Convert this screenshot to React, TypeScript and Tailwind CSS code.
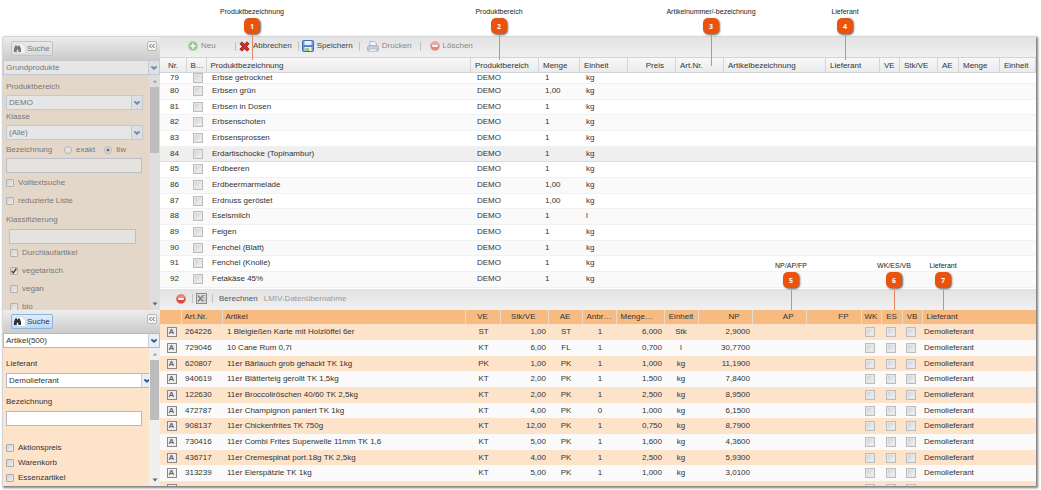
import type { ReactNode } from "react";
import { clsx } from "clsx";

type Product = { nr: number; name: string; menge: string; einheit: string };

const PRODUCTS: Product[] = [
  { nr: 79, name: "Erbse getrocknet", menge: "1", einheit: "kg" },
  { nr: 80, name: "Erbsen grün", menge: "1,00", einheit: "kg" },
  { nr: 81, name: "Erbsen in Dosen", menge: "1", einheit: "kg" },
  { nr: 82, name: "Erbsenschoten", menge: "1", einheit: "kg" },
  { nr: 83, name: "Erbsensprossen", menge: "1", einheit: "kg" },
  { nr: 84, name: "Erdartischocke (Topinambur)", menge: "1", einheit: "kg" },
  { nr: 85, name: "Erdbeeren", menge: "1", einheit: "kg" },
  { nr: 86, name: "Erdbeermarmelade", menge: "1,00", einheit: "kg" },
  { nr: 87, name: "Erdnuss geröstet", menge: "1,00", einheit: "kg" },
  { nr: 88, name: "Eselsmilch", menge: "1", einheit: "l" },
  { nr: 89, name: "Feigen", menge: "1", einheit: "kg" },
  { nr: 90, name: "Fenchel (Blatt)", menge: "1", einheit: "kg" },
  { nr: 91, name: "Fenchel (Knolle)", menge: "1", einheit: "kg" },
  { nr: 92, name: "Fetakäse 45%", menge: "1", einheit: "kg" },
];

const SELECTED_NR = 84;

const PRODUCT_COLUMNS = [
  { label: "Nr.", col: "w-[26px]", head: "pl-2" },
  { label: "B…", col: "w-5", head: "pl-1" },
  { label: "Produktbezeichnung", col: "", head: "pl-1" },
  { label: "Produktbereich", col: "w-[68px]", head: "pl-1" },
  { label: "Menge", col: "w-[41px]", head: "pl-1" },
  { label: "Einheit", col: "w-12", head: "pl-1" },
  { label: "Preis", col: "w-12", head: "pr-[11px] text-right" },
  { label: "Art.Nr.", col: "w-12", head: "pl-1" },
  { label: "Artikelbezeichnung", col: "w-[102px]", head: "pl-1" },
  { label: "Lieferant", col: "w-[54px]", head: "pl-1" },
  { label: "VE", col: "w-5", head: "pl-1" },
  { label: "Stk/VE", col: "w-[38px]", head: "pl-1" },
  { label: "AE", col: "w-[21px]", head: "pl-1" },
  { label: "Menge", col: "w-[41px]", head: "pl-1" },
  { label: "Einheit", col: "w-9", head: "pl-1" },
];

type Article = {
  nr: string;
  name: string;
  ve: string;
  stk: string;
  ae: string;
  anbruch: string;
  menge: string;
  einheit: string;
  np: string;
};

const ARTICLES: Article[] = [
  { nr: "264226", name: "1 Bleigießen Karte mit Holzlöffel 6er", ve: "ST", stk: "1,00", ae: "ST", anbruch: "1", menge: "6,000", einheit: "Stk", np: "2,9000" },
  { nr: "729046", name: "10 Cane Rum 0,7l", ve: "KT", stk: "6,00", ae: "FL", anbruch: "1", menge: "0,700", einheit: "l", np: "30,7700" },
  { nr: "620807", name: "11er Bärlauch grob gehackt TK 1kg", ve: "PK", stk: "1,00", ae: "PK", anbruch: "1", menge: "1,000", einheit: "kg", np: "11,1900" },
  { nr: "940619", name: "11er Blätterteig gerollt TK 1,5kg", ve: "KT", stk: "2,00", ae: "PK", anbruch: "1", menge: "1,500", einheit: "kg", np: "7,8400" },
  { nr: "122630", name: "11er Broccoliröschen 40/60 TK 2,5kg", ve: "KT", stk: "2,00", ae: "PK", anbruch: "1", menge: "2,500", einheit: "kg", np: "8,9500" },
  { nr: "472787", name: "11er Champignon paniert TK 1kg", ve: "KT", stk: "4,00", ae: "PK", anbruch: "0", menge: "1,000", einheit: "kg", np: "6,1500" },
  { nr: "908137", name: "11er Chickenfrites TK 750g", ve: "KT", stk: "12,00", ae: "PK", anbruch: "1", menge: "0,750", einheit: "kg", np: "8,7900" },
  { nr: "730416", name: "11er Combi Frites Superwelle 11mm TK 1,6", ve: "KT", stk: "5,00", ae: "PK", anbruch: "1", menge: "1,600", einheit: "kg", np: "4,3600" },
  { nr: "436717", name: "11er Cremespinat port.18g TK 2,5kg", ve: "KT", stk: "4,00", ae: "PK", anbruch: "1", menge: "2,500", einheit: "kg", np: "5,9300" },
  { nr: "313239", name: "11er Eierspätzle TK 1kg", ve: "KT", stk: "5,00", ae: "PK", anbruch: "1", menge: "1,000", einheit: "kg", np: "3,0100" },
];

const ARTICLE_COLUMNS = [
  { label: "", col: "w-[21px]", head: "" },
  { label: "Art.Nr.", col: "w-[41px]", head: "pl-[3px] text-left" },
  { label: "Artikel", col: "", head: "pl-[3px] text-left" },
  { label: "VE", col: "w-[35px]", head: "text-center" },
  { label: "Stk/VE", col: "w-12", head: "pr-3 text-right" },
  { label: "AE", col: "w-[34px]", head: "text-center" },
  { label: "Anbr…", col: "w-[34px]", head: "pl-1 text-left" },
  { label: "Menge…", col: "w-12", head: "pl-1 text-left" },
  { label: "Einheit", col: "w-[34px]", head: "text-center" },
  { label: "NP", col: "w-[54px]", head: "pr-3 text-right" },
  { label: "AP", col: "w-[54px]", head: "pr-3 text-right" },
  { label: "FP", col: "w-[55px]", head: "pr-3 text-right" },
  { label: "WK", col: "w-5", head: "text-center" },
  { label: "ES", col: "w-[21px]", head: "text-center" },
  { label: "VB", col: "w-5", head: "text-center" },
  { label: "Lieferant", col: "w-[114px]", head: "pl-1 text-left" },
];

const CALLOUTS = [
  { nr: 1, label: "Produktbezeichnung", pos: "left-[252px] top-2", line: "h-[26px]" },
  { nr: 2, label: "Produktbereich", pos: "right-[542px] top-2", line: "h-[26px]" },
  { nr: 3, label: "Artikelnummer/-bezeichnung", pos: "right-[330px] top-2", line: "h-8" },
  { nr: 4, label: "Lieferant", pos: "right-[196px] top-2", line: "h-[26px]" },
  { nr: 5, label: "NP/AP/FP", pos: "right-[250px] bottom-[180px]", line: "h-[22px]" },
  { nr: 6, label: "WK/ES/VB", pos: "right-[147px] bottom-[180px]", line: "h-[22px]" },
  { nr: 7, label: "Lieferant", pos: "right-[98px] bottom-[180px]", line: "h-[22px]" },
];

function Callout({ nr, label, pos, line }: (typeof CALLOUTS)[number]) {
  return (
    <div className={clsx("pointer-events-none absolute z-20 flex w-0 flex-col items-center", pos)}>
      <span className="text-[7px] leading-[7px] whitespace-nowrap text-[#222]">{label}</span>
      <span className="mt-[3px] flex size-4 shrink-0 items-center justify-center rounded-[5px] bg-[#e9530e] font-['Open_Sans',sans-serif] text-[7px] leading-none font-bold text-white shadow-[1px_1px_2px_rgba(0,0,0,0.6)]">
        {nr}
      </span>
      <span className={clsx("w-px shrink-0 bg-[#e98560]", line)} />
    </div>
  );
}

function Tick({ label }: { label: string }) {
  return (
    <input
      type="checkbox"
      aria-label={label}
      className="mx-auto block size-[10px] appearance-none border border-[#bdbdbd] bg-linear-to-br from-[#c9ced4] to-[#f8f8f8] shadow-[inset_0_0_0_1px_#e6e6e6] checked:bg-[#999] checked:bg-none"
    />
  );
}

function CheckField({ label, checked = false, className }: { label: string; checked?: boolean; className?: string }) {
  return (
    <label className={clsx("flex items-center gap-1", className)}>
      <span className="relative flex size-2">
        <input
          type="checkbox"
          defaultChecked={checked}
          className="peer size-2 appearance-none rounded-[1px] border border-[#a9aaac] bg-linear-to-br from-[#cfd2d4] to-[#f0f0f0]"
        />
        <svg aria-hidden viewBox="0 0 8 8" fill="none" stroke="#444" strokeWidth="1.4" className="pointer-events-none absolute inset-0 hidden size-2 peer-checked:block">
          <path d="M1.6 4 3.3 5.9 6.4 1.5" />
        </svg>
      </span>
      {label}
    </label>
  );
}

function RadioField({ label, checked = false }: { label: string; checked?: boolean }) {
  return (
    <label className="flex items-center gap-1">
      <input
        type="radio"
        name="suchart"
        defaultChecked={checked}
        className="size-2 appearance-none rounded-full border border-[#a9aaac] checked:bg-[radial-gradient(circle,#555_0_1px,#e6e6e6_2px)]"
      />
      {label}
    </label>
  );
}

function Combo({ label, value, muted, className }: { label: string; value: string; muted?: boolean; className?: string }) {
  return (
    <span className={clsx("relative flex h-[15px] border bg-white", muted ? "border-[#c6c8d0]" : "border-[#b5b8c8]", className)}>
      <select aria-label={label} className="min-w-0 flex-1 appearance-none pr-3 pl-[2px] leading-[13px] outline-none">
        <option>{value}</option>
      </select>
      <span
        className={clsx(
          "pointer-events-none absolute inset-y-0 right-0 flex w-[11px] items-center justify-center border-l",
          muted ? "border-[#c6c8d0] bg-[#dcdfe4]" : "border-[#c5cde0] bg-[#e9eff8]",
        )}
      >
        <svg aria-hidden viewBox="0 0 6 4" className="h-1 w-[6px]" fill={muted ? "#7085ad" : "#35558f"}>
          <path d="M0 .3h1.8L3 1.5 4.2.3H6v.9L3 3.9 0 1.2z" />
        </svg>
      </span>
    </span>
  );
}

function TextField({ label, className }: { label: string; className?: string }) {
  return (
    <input
      type="text"
      aria-label={label}
      className={clsx("block h-[15px] border border-[#b5b8c8] bg-white px-1 outline-none", className)}
    />
  );
}

function SidePanel({
  combo,
  comboLabel,
  active,
  className,
  thumb,
  children,
}: {
  combo: string;
  comboLabel: string;
  active?: boolean;
  className?: string;
  thumb: string;
  children: ReactNode;
}) {
  return (
    <section className={clsx("flex min-h-0 flex-col", className)}>
      <header className="flex h-[23px] shrink-0 items-start justify-between bg-linear-to-b from-[#ededed] to-[#cbcbcb] pt-1 pr-[3px] pl-2">
        <button
          type="button"
          className={clsx(
            "flex h-[15px] items-center gap-px rounded-[2px] border pr-[2px] pl-[2px]",
            active
              ? "border-[#8fb5dc] bg-linear-to-b from-[#e2effc] to-[#b9d8f8] text-[#333]"
              : "border-[#c3c3c3] bg-linear-to-b from-[#e9e9e9] to-[#dcdcdc] text-[#777]",
          )}
        >
          <svg aria-hidden viewBox="0 0 12 11" className={clsx("h-[11px] w-3", !active && "opacity-60")}>
            <path d="M3 .5h6l2.500 2.500v7.500H3z" fill="#fff" stroke="#c5ccd4" strokeWidth=".6" />
            <path d="M9 .5V3h2.500" fill="none" stroke="#c5ccd4" strokeWidth=".6" />
            <path d="M1.200 2.500h1.800v1h1v-1h1.800L7 6v3H4.300V6.800h-1.600V9H0V6z" fill="#2f3237" />
          </svg>
          Suche
        </button>
        <button
          type="button"
          aria-label="Einklappen"
          className="flex size-[10px] items-center justify-center rounded-[2px] border border-[#b9b9b9] bg-[#f3f3f3]"
        >
          <svg aria-hidden viewBox="0 0 8 6" fill="none" stroke="#666" strokeWidth="1" className="h-[6px] w-2 shrink-0">
            <path d="M3.500 1 1.500 3l2 2M6.500 1l-2 2 2 2" />
          </svg>
        </button>
      </header>
      <Combo label={comboLabel} value={combo} muted={!active} />
      <div className="flex min-h-0 flex-1">
        <div className="min-w-0 flex-1 overflow-hidden pl-[3px]">{children}</div>
        <div className={clsx("flex w-[11px] shrink-0 flex-col items-center pt-1 pb-1", active ? "bg-[#efefef]" : "bg-[#dedede]")}>
          <svg aria-hidden viewBox="0 0 6 4" className="h-1 w-[6px] shrink-0" fill="#9a9a9a">
            <path d="M1 3.500 3 1l2 2.500z" />
          </svg>
          <span className={clsx("mt-1 w-[9px] shrink-0 bg-[#bdbdbd]", thumb)} />
          <svg aria-hidden viewBox="0 0 6 4" className="mt-auto h-1 w-[6px] shrink-0" fill="#666">
            <path d="M.5.5 3 3.500 5.500.5z" />
          </svg>
        </div>
      </div>
    </section>
  );
}

function ToolButton({ icon, label, muted, className }: { icon: ReactNode; label: string; muted?: boolean; className?: string }) {
  return (
    <button type="button" className={clsx("flex items-center gap-[3px]", muted ? "text-[#888]" : "text-[#444]", className)}>
      {icon}
      {label}
    </button>
  );
}

function Separator() {
  return <span className="h-[9px] w-px bg-[#c3c3bb]" />;
}

function MinusIcon({ muted }: { muted?: boolean }) {
  return (
    <svg aria-hidden viewBox="0 0 10 10" className={clsx("size-[10px]", muted && "opacity-60")}>
      <circle cx="5" cy="5" r="4.600" fill="#e5443c" stroke="#d98780" strokeWidth=".6" />
      <path d="M1.200 4a3.900 3.900 0 0 1 7.600 0z" fill="#f08a80" />
      <rect x="2.200" y="4" width="5.600" height="2" rx=".3" fill="#fff" />
    </svg>
  );
}

function PlusIcon() {
  return (
    <svg aria-hidden viewBox="0 0 10 10" className="size-[10px] opacity-60">
      <circle cx="5" cy="5" r="4.600" fill="#63b34e" stroke="#8fc482" strokeWidth=".6" />
      <path d="M4.200 2.300h1.600v1.900h1.900v1.600H5.800v1.900H4.200V5.800H2.300V4.200h1.900z" fill="#fff" />
    </svg>
  );
}

function CancelIcon() {
  return (
    <svg aria-hidden viewBox="0 0 11 11" className="size-[11px]">
      <path
        d="M1 2.800 2.800.9 5.500 3.200 8.200.9 10 2.800 7.600 5.500l2.500 2.700-1.900 1.900-2.700-2.300-2.700 2.300L.9 8.200l2.500-2.700z"
        fill="#dc2a22"
        stroke="#7d1512"
        strokeWidth=".8"
      />
    </svg>
  );
}

function SaveIcon() {
  return (
    <svg aria-hidden viewBox="0 0 12 12" className="size-3">
      <rect x=".5" y=".5" width="11" height="11" rx="1" fill="#6d9be0" stroke="#3f6cb8" />
      <rect x="2.500" y="1" width="7" height="4" fill="#e9f1fb" />
      <rect x="1.500" y="5.600" width="9" height="1" fill="#3f6cb8" />
      <rect x="2.500" y="7" width="7" height="4" fill="#eef5e8" />
      <rect x="3.300" y="8.200" width="4" height="2.800" fill="#9cc276" />
    </svg>
  );
}

function PrintIcon() {
  return (
    <svg aria-hidden viewBox="0 0 12 11" className="h-[11px] w-3 opacity-70">
      <path d="M3 .6h4.800L9.300 2v3.500H3z" fill="#fff" stroke="#6f97cf" strokeWidth=".8" />
      <path d="M1.800 4.600h8.400l1.300 1.600v3H.5v-3z" fill="#b9c3d2" stroke="#7f8da3" strokeWidth=".8" />
      <path d="M2.500 7.800h7l.8 2.600H1.700z" fill="#eef2f8" stroke="#7f8da3" strokeWidth=".6" />
    </svg>
  );
}

function ExcelIcon() {
  return (
    <svg aria-hidden viewBox="0 0 11 11" className="size-[11px]">
      <rect x=".5" y=".5" width="10" height="10" fill="#dcdcdc" stroke="#8c8c8c" />
      <path d="M6.500 2.500h3M6.500 5h3M6.500 7.500h3" stroke="#9a9a9a" strokeWidth=".8" />
      <path d="m2 2.500 5 6M7 2.500l-5 6" stroke="#808080" strokeWidth="1.500" />
    </svg>
  );
}

function ProductGrid() {
  const cols = (
    <colgroup>
      {PRODUCT_COLUMNS.map((c, i) => (
        <col key={i} className={c.col} />
      ))}
    </colgroup>
  );

  return (
    <>
      <table className="w-full table-fixed border-collapse">
        {cols}
        <thead>
          <tr className="h-[15px] bg-linear-to-b from-[#f8f8f8] to-[#e8eaed]">
            {PRODUCT_COLUMNS.map((c, i) => (
              <th
                key={i}
                scope="col"
                className={clsx(
                  "overflow-hidden border-y border-r border-[#d4d4d4] py-0 text-left leading-[13px] font-normal whitespace-nowrap",
                  c.head,
                )}
              >
                {c.label}
              </th>
            ))}
          </tr>
        </thead>
      </table>
      {/* list is scrolled a few pixels into its first row */}
      <div className="min-h-0 flex-1 overflow-hidden bg-white">
        <table className="-mt-[6px] w-full table-fixed border-collapse" aria-label="Produkte">
          {cols}
          <tbody>
            {PRODUCTS.map((p) => (
              <tr
                key={p.nr}
                className={clsx(
                  "h-4 border-b first:align-bottom nth-[3n]:h-[15px]",
                  p.nr === SELECTED_NR ? "border-[#dcdcdc] bg-[#efefef]" : "border-[#f1f1f1] even:bg-[#fafafa]",
                )}
              >
                <td className="p-0 pl-[10px]">{p.nr}</td>
                <td className="p-0 pl-1">
                  <Tick label={`${p.name} auswählen`} />
                </td>
                <td className="p-0 pl-[6px]">{p.name}</td>
                <td className="p-0 pl-[6px]">DEMO</td>
                <td className="p-0 pl-[6px]">{p.menge}</td>
                <td className="p-0 pl-[6px]">{p.einheit}</td>
                <td colSpan={9} className="p-0" />
              </tr>
            ))}
          </tbody>
        </table>
      </div>
    </>
  );
}

function ArticleGrid() {
  return (
    <table className="w-full table-fixed border-collapse" aria-label="Artikel">
      <colgroup>
        {ARTICLE_COLUMNS.map((c, i) => (
          <col key={i} className={c.col} />
        ))}
      </colgroup>
      <thead>
        <tr className="h-[14px] bg-[#f7bb82]">
          {ARTICLE_COLUMNS.map((c, i) => (
            <th
              key={i}
              scope="col"
              className={clsx(
                "overflow-hidden border-r border-[#e9dccf] py-0 font-normal whitespace-nowrap last:border-r-0",
                c.head,
              )}
            >
              {c.label}
            </th>
          ))}
        </tr>
      </thead>
      <tbody>
        {[...ARTICLES, null].map((a, i) => (
          <tr key={i} className="h-4 odd:bg-[#fde3ca] even:bg-[#fafafa] nth-[3n]:h-[15px]">
            <td className="p-0 pl-[2px]">
              <span className="mx-auto flex size-[10px] items-center justify-center border border-[#888] bg-[#eee] text-[8px] leading-none font-bold text-[#666]">
                A
              </span>
            </td>
            <td className="p-0 pl-1">{a?.nr}</td>
            <td className="truncate p-0 pl-[5px]">{a?.name}</td>
            <td className="p-0 pl-[2px] text-center">{a?.ve}</td>
            <td className="p-0 pr-[2px] text-right">{a?.stk}</td>
            <td className="p-0 pl-[2px] text-center">{a?.ae}</td>
            <td className="p-0 pl-[2px] text-center">{a?.anbruch}</td>
            <td className="p-0 pr-[2px] text-right">{a?.menge}</td>
            <td className="p-0 text-center">{a?.einheit}</td>
            <td className="p-0 pr-[2px] text-right">{a?.np}</td>
            <td className="p-0" />
            <td className="p-0" />
            {["WK", "ES", "VB"].map((flag) => (
              <td key={flag} className="p-0 pr-[2px]">
                <Tick label={flag} />
              </td>
            ))}
            <td className="p-0 pl-[2px]">{a && "Demolieferant"}</td>
          </tr>
        ))}
      </tbody>
    </table>
  );
}

export default function App() {
  return (
    <div className="relative flex h-screen flex-col overflow-hidden bg-white pt-[37px] pr-[5px] pb-1 pl-[3px] font-['Liberation_Sans',Arial,sans-serif] text-[8px] leading-[10px] text-[#333]">
      <div className="flex min-h-0 flex-1 shadow-[1px_1px_2px_1px_rgba(0,0,0,0.5)]">
        <aside className="flex w-[157px] shrink-0 flex-col">
          <SidePanel
            combo="Grundprodukte"
            comboLabel="Suchbereich Produkte"
            className="flex-1 bg-[#e3d7c9] text-[#777] [&_input]:bg-[#e6e6e6] [&_input]:opacity-80 [&_select]:bg-[#e6e6e6]"
            thumb="h-[66px]"
          >
            <p className="mt-[7px]">Produktbereich</p>
            <Combo label="Produktbereich" value="DEMO" muted className="mt-[3px] mr-[6px]" />
            <p className="mt-[2px]">Klasse</p>
            <Combo label="Klasse" value="(Alle)" muted className="mt-[3px] mr-[6px]" />
            <div className="mt-[5px] flex items-center">
              <span className="w-[58px]">Bezeichnung</span>
              <div className="flex gap-[9px]">
                <RadioField label="exakt" />
                <RadioField label="tlw" checked />
              </div>
            </div>
            <TextField label="Bezeichnung" className="mt-[3px] w-[136px]" />
            <CheckField label="Volltextsuche" className="mt-[5px]" />
            <CheckField label="reduzierte Liste" className="mt-2" />
            <p className="mt-[9px]">Klassifizierung</p>
            <TextField label="Klassifizierung" className="mt-1 ml-[3px] w-[127px]" />
            <div className="mt-1 ml-1 flex flex-col gap-2">
              <CheckField label="Durchlaufartikel" />
              <CheckField label="vegetarisch" checked />
              <CheckField label="vegan" />
              <CheckField label="bio" />
            </div>
          </SidePanel>
          <SidePanel
            combo="Artikel(500)"
            comboLabel="Suchbereich Artikel"
            active
            className="h-[176px] bg-[#fde3ca]"
            thumb="h-[60px]"
          >
            <p className="mt-[11px]">Lieferant</p>
            <Combo label="Lieferant" value="Demolieferant" className="mt-1 -mr-1" />
            <p className="mt-[9px]">Bezeichnung</p>
            <TextField label="Bezeichnung" className="mt-1 w-[136px]" />
            <div className="mt-[17px] flex flex-col gap-[5px]">
              <CheckField label="Aktionspreis" />
              <CheckField label="Warenkorb" />
              <CheckField label="Essenzartikel" />
            </div>
          </SidePanel>
        </aside>

        <main className="flex min-w-0 flex-1 flex-col">
          <div className="flex h-5 shrink-0 items-center bg-linear-to-b from-[#e2e2e2] to-[#f0f0f0] pb-[2px] pl-7">
            <ToolButton icon={<PlusIcon />} label="Neu" muted className="w-[47px]" />
            <Separator />
            <ToolButton icon={<CancelIcon />} label="Abbrechen" className="mr-[6px] ml-[3px]" />
            <Separator />
            <ToolButton icon={<SaveIcon />} label="Speichern" className="mr-[6px] ml-[3px]" />
            <Separator />
            <ToolButton icon={<PrintIcon />} label="Drucken" muted className="mr-2 ml-[7px]" />
            <Separator />
            <ToolButton icon={<MinusIcon muted />} label="Löschen" muted className="ml-[9px]" />
          </div>
          <ProductGrid />

          <section className="flex h-[197px] shrink-0 flex-col overflow-hidden">
            <div className="flex h-[21px] shrink-0 items-center bg-linear-to-b from-[#e2e2e2] to-[#f0f0f0] pb-[2px] pl-4">
              <button type="button" aria-label="Entfernen" className="mr-[6px]">
                <MinusIcon />
              </button>
              <Separator />
              <button type="button" aria-label="Excel" className="mr-[5px] ml-[3px]">
                <ExcelIcon />
              </button>
              <Separator />
              <button type="button" className="mr-[6px] ml-[6px] text-[#555]">
                Berechnen
              </button>
              <button type="button" className="text-[#999]">
                LMIV-Datenübernahme
              </button>
            </div>
            <ArticleGrid />
          </section>
        </main>
      </div>

      {CALLOUTS.map((c) => (
        <Callout key={c.nr} {...c} />
      ))}
    </div>
  );
}
